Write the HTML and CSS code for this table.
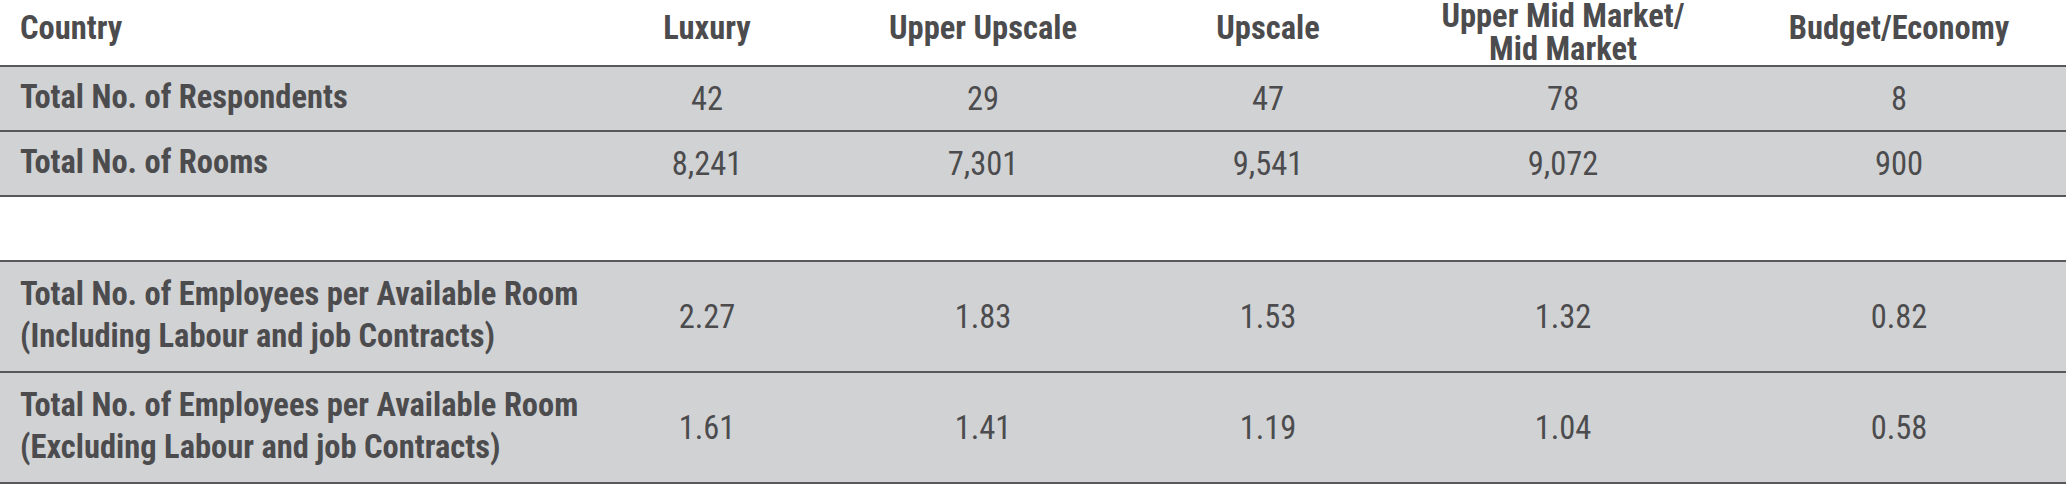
FILE: index.html
```html
<!DOCTYPE html>
<html lang="en">
<head>
<meta charset="utf-8">
<title>Employees per Available Room</title>
<link rel="stylesheet" href="styles.css">
</head>
<body>
<div class="table">
  <div class="row head">
    <div class="cell label single">Country</div>
    <div class="cell single">Luxury</div>
    <div class="cell single">Upper Upscale</div>
    <div class="cell single">Upscale</div>
    <div class="cell double">Upper Mid Market/<br>Mid Market</div>
    <div class="cell single">Budget/Economy</div>
  </div>

  <div class="group">
    <div class="row body short">
      <div class="cell label">Total No. of Respondents</div>
      <div class="cell value">42</div>
      <div class="cell value">29</div>
      <div class="cell value">47</div>
      <div class="cell value">78</div>
      <div class="cell value">8</div>
    </div>
    <div class="row body short">
      <div class="cell label">Total No. of Rooms</div>
      <div class="cell value">8,241</div>
      <div class="cell value">7,301</div>
      <div class="cell value">9,541</div>
      <div class="cell value">9,072</div>
      <div class="cell value">900</div>
    </div>
  </div>

  <div class="spacer"></div>

  <div class="group">
    <div class="row body tall">
      <div class="cell label">Total No. of Employees per Available Room<br>(Including Labour and job Contracts)</div>
      <div class="cell value">2.27</div>
      <div class="cell value">1.83</div>
      <div class="cell value">1.53</div>
      <div class="cell value">1.32</div>
      <div class="cell value">0.82</div>
    </div>
    <div class="row body tall">
      <div class="cell label">Total No. of Employees per Available Room<br>(Excluding Labour and job Contracts)</div>
      <div class="cell value">1.61</div>
      <div class="cell value">1.41</div>
      <div class="cell value">1.19</div>
      <div class="cell value">1.04</div>
      <div class="cell value">0.58</div>
    </div>
  </div>
</div>
</body>
</html>
```
FILE: styles.css
```css
html, body {
  margin: 0;
  padding: 0;
  background: #ffffff;
}

body {
  font-family: Roboto, "Liberation Sans", sans-serif;
  font-stretch: 75%;
  font-size: 32.5px;
  color: #4c4c4e;
}

.table {
  width: 2066px;
}

.row {
  display: grid;
  grid-template-columns: 590px 234px 318px 252px 338px 334px;
  align-items: center;
}

.cell {
  text-align: center;
}

.cell.label {
  text-align: left;
  padding-left: 20px;
  font-weight: 700;
}

.head {
  height: 65px;
  font-weight: 700;
  line-height: 33px;
}

.head .single {
  padding-bottom: 13px;
}

.head .double {
  padding-bottom: 4px;
}

.group {
  border-bottom: 2px solid #58585a;
}

.body {
  background: #d1d2d4;
  border-top: 2px solid #58585a;
}

.body.short {
  height: 63px;
}

.body.tall {
  height: 109px;
}

.body .label {
  line-height: 42px;
  padding-bottom: 4px;
}

.value {
  font-weight: 400;
  line-height: 40px;
}

.spacer {
  height: 63px;
}
```
